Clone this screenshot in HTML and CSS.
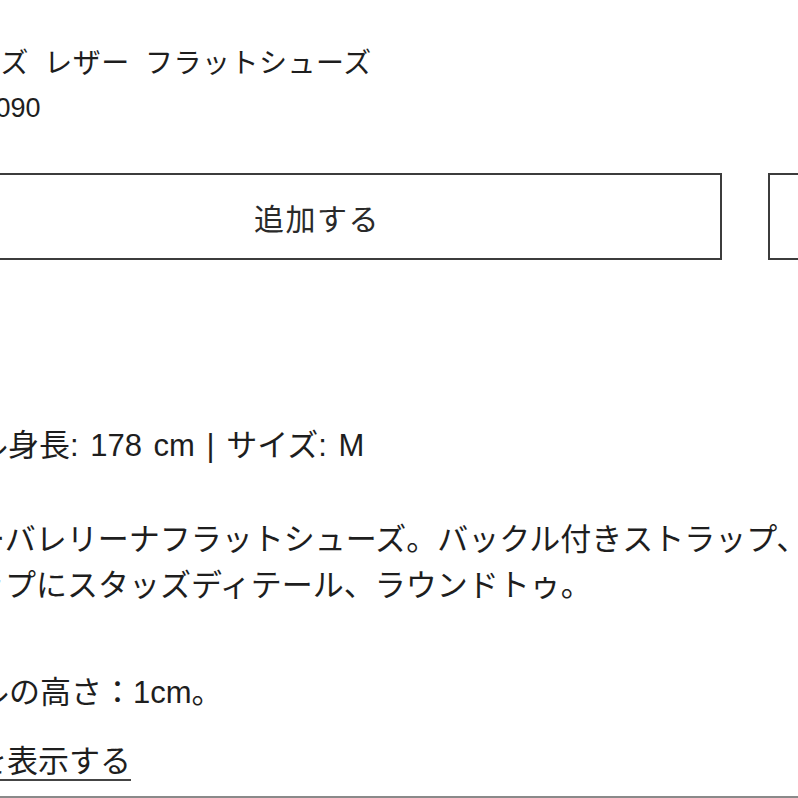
FILE: index.html
```html
<!DOCTYPE html>
<html lang="ja">
<head>
<meta charset="utf-8">
<title>スタッズ レザー フラットシューズ</title>
<link rel="stylesheet" href="styles.css">
</head>
<body>
<div class="page">
  <header class="product-head">
    <h1 class="title">スタッズ レザー フラットシューズ</h1>
    <p class="price">¥142,090</p>
  </header>
  <div class="actions">
    <button class="btn btn-add" type="button">追加する</button>
    <button class="btn btn-wish" type="button" aria-label="ウィッシュリスト"></button>
  </div>
  <section class="details">
    <p class="model">当モデル身長: 178 cm | サイズ: M</p>
    <p class="desc">黒レザーバレリーナフラットシューズ。バックル付きストラップ、ストラップにスタッズディテール、ラウンドトゥ。</p>
    <p class="heel">・ヒールの高さ：1cm。</p>
    <div class="more-row"><a class="more" href="#">すべてを表示する</a></div>
  </section>
  <div class="rule"></div>
</div>
</body>
</html>
```
FILE: styles.css
```css
html, body {
  margin: 0;
  padding: 0;
  background: #ffffff;
}
body {
  overflow: hidden;
  color: #1e1e1e;
  font-family: "Liberation Sans", "Noto Sans CJK JP", sans-serif;
}
.page {
  margin-left: -88px;
  width: 1100px;
  padding-top: 44px;
}
.title {
  margin: 0;
  padding-left: 3px;
  font-size: 28px;
  font-weight: 400;
  line-height: 40px;
  letter-spacing: 0.5px;
  word-spacing: 7px;
  white-space: nowrap;
}
.price {
  margin: 0;
  padding-left: 16px;
  font-size: 27px;
  line-height: 48px;
}
.actions {
  display: flex;
  gap: 46px;
  margin-top: 41px;
}
.btn {
  box-sizing: border-box;
  height: 87px;
  background: #fff;
  border: 2px solid #3c3c3c;
  border-radius: 0;
  padding: 0;
  color: #2a2a2a;
  font-family: "Liberation Sans", "Noto Sans CJK JP", sans-serif;
  font-size: 30px;
  letter-spacing: 1.5px;
}
.btn-add {
  width: 810px;
}
.btn-wish {
  width: 200px;
}
.details {
  margin-left: -31px;
  width: 945px;
  margin-top: 163px;
  font-size: 31px;
  line-height: 46px;
}
.details p {
  margin: 0;
}
.model {
  margin-left: 3px !important;
  word-spacing: 3px;
}
.desc {
  margin-top: 48px !important;
}
.heel {
  margin-top: 61px !important;
  margin-left: 4px !important;
}
.more-row {
  margin-top: 23px;
  margin-left: 6px;
}
.more {
  color: #1e1e1e;
  text-decoration: underline;
  text-decoration-thickness: 2px;
  text-underline-offset: 7px;
  text-decoration-color: #444;
}
.rule {
  margin-top: 11px;
  border-top: 2px solid #8a8a8a;
}
```
